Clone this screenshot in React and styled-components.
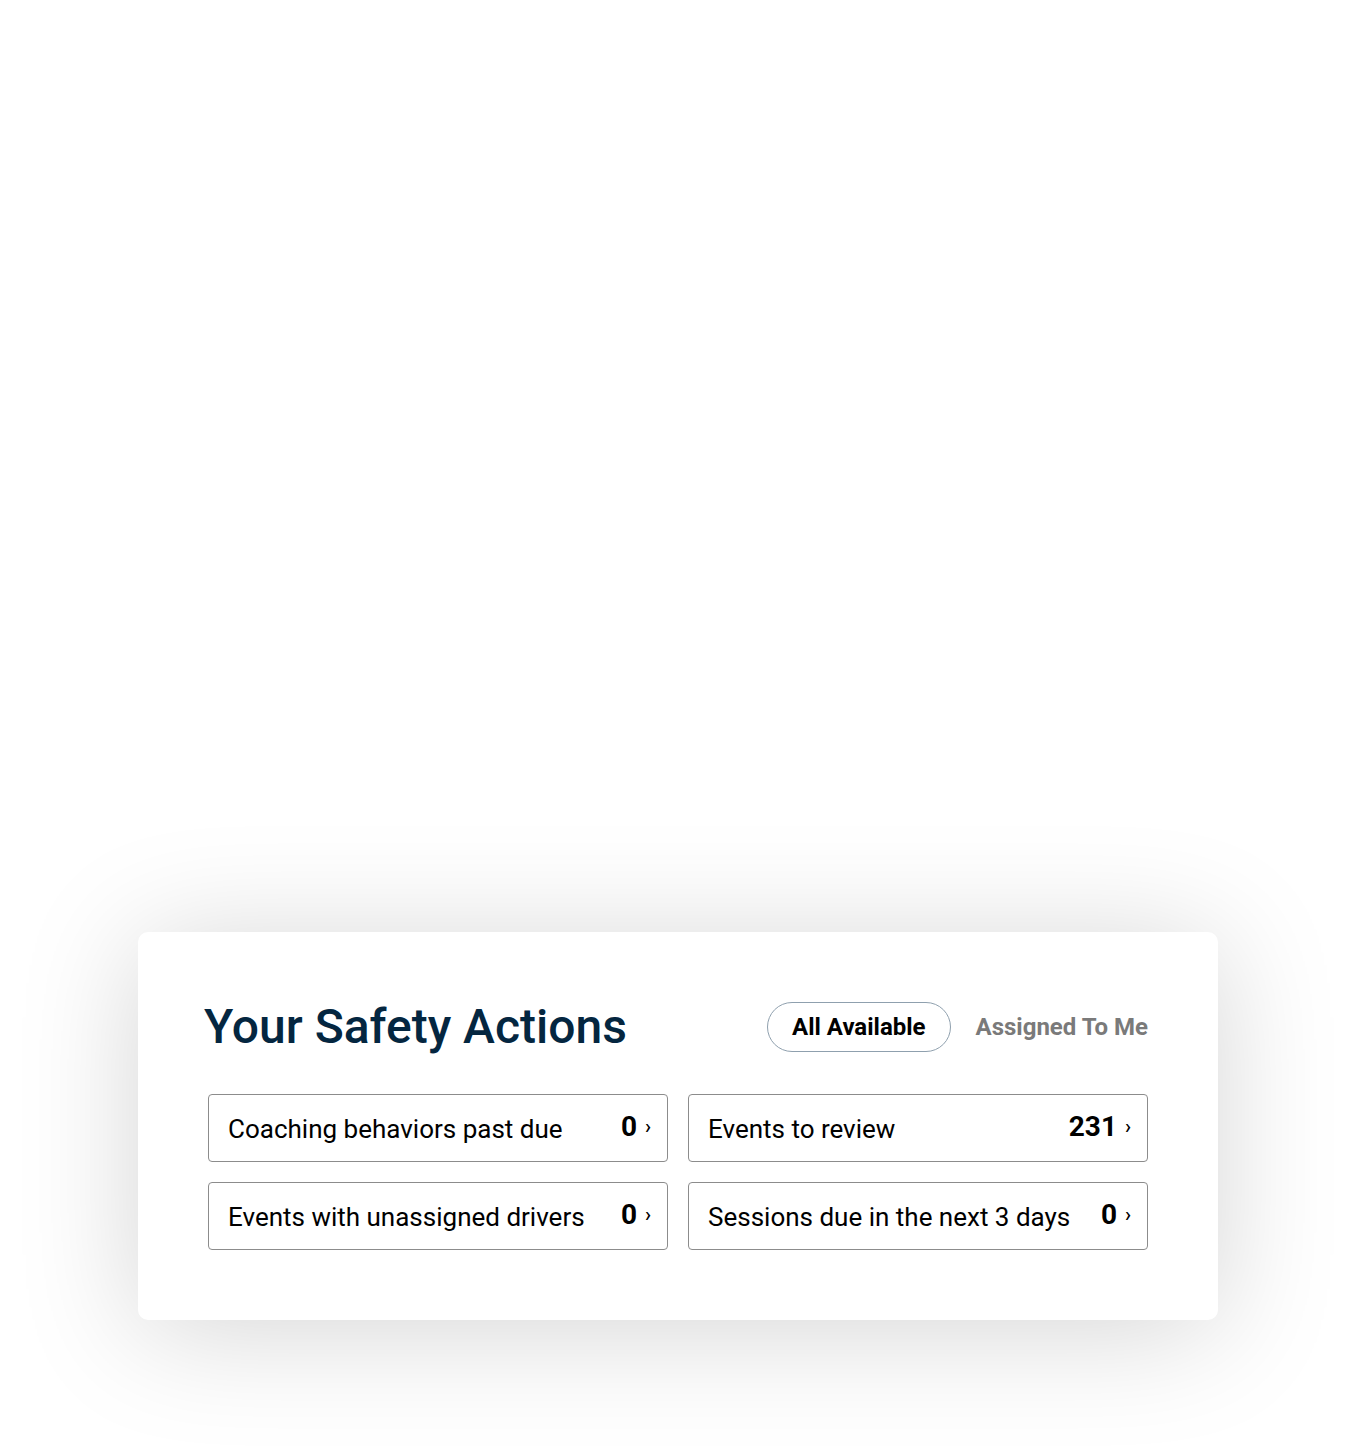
import React from 'react'
import styled, { createGlobalStyle } from 'styled-components'

const GlobalStyle = createGlobalStyle`
  body {
    margin: 0;
    background: #ffffff;
    font-family: Roboto, "Liberation Sans", sans-serif;
  }
`

const Page = styled.div`
  min-height: 1450px;
  padding: 932px 0 0 138px;
  box-sizing: border-box;
`

const Card = styled.section`
  width: 1080px;
  box-sizing: border-box;
  padding: 70px;
  background: #ffffff;
  border-radius: 10px;
  box-shadow: 0 10px 120px rgba(0, 0, 0, 0.17);
`

const Header = styled.div`
  display: flex;
  align-items: center;
  justify-content: space-between;
  margin-bottom: 42px;
`

const Title = styled.h2`
  margin: 0 0 0 -4px;
  font-size: 48px;
  font-weight: 500;
  color: #042640;
  line-height: 1;
`

const Tabs = styled.div`
  display: flex;
  align-items: center;
  gap: 25px;
`

const Tab = styled.button`
  font-family: Roboto, "Liberation Sans", sans-serif;
  font-size: 24px;
  font-weight: 700;
  height: 50px;
  padding: ${p => (p.active ? '0 24px' : '0')};
  border-radius: 25px;
  border: ${p => (p.active ? '1px solid #8fa0ae' : 'none')};
  background: transparent;
  color: ${p => (p.active ? '#000000' : '#7a7a7a')};
  cursor: pointer;
`

const Grid = styled.div`
  display: grid;
  grid-template-columns: 1fr 1fr;
  gap: 20px;
`

const Item = styled.a`
  display: flex;
  align-items: center;
  height: 68px;
  box-sizing: border-box;
  padding: 0 16px 0 19px;
  border: 1px solid #8c8c8c;
  border-radius: 4px;
  color: #000000;
  text-decoration: none;
`

const Label = styled.span`
  flex: 1;
  font-size: 26px;
  font-weight: 400;
  padding-top: 2px;
`

const Count = styled.span`
  font-size: 28px;
  font-weight: 700;
  margin-bottom: 4px;
`

const Chevron = styled.span`
  font-size: 20px;
  font-weight: 500;
  margin-left: 8px;
  margin-bottom: 4px;
`

const actions = [
  { label: 'Coaching behaviors past due', count: 0 },
  { label: 'Events to review', count: 231 },
  { label: 'Events with unassigned drivers', count: 0 },
  { label: 'Sessions due in the next 3 days', count: 0 },
]

const App = () => (
  <Page>
    <GlobalStyle />
    <Card>
      <Header>
        <Title>Your Safety Actions</Title>
        <Tabs>
          <Tab active>All Available</Tab>
          <Tab>Assigned To Me</Tab>
        </Tabs>
      </Header>
      <Grid>
        {actions.map(a => (
          <Item key={a.label} href="#">
            <Label>{a.label}</Label>
            <Count>{a.count}</Count>
            <Chevron>›</Chevron>
          </Item>
        ))}
      </Grid>
    </Card>
  </Page>
)

export default App
